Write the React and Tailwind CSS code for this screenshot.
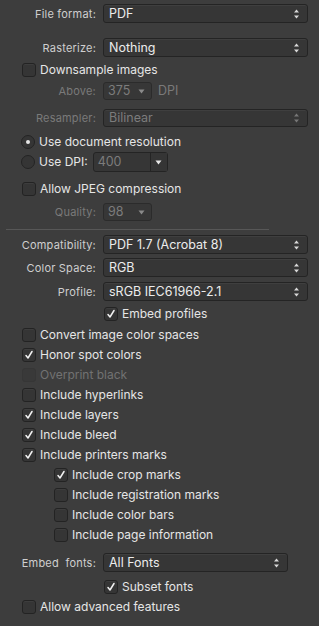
import React from "react";

function Arrows({ dim }) {
  return (
    <svg width="7" height="11" viewBox="0 0 7 11" className="absolute right-[7px] top-1/2 -translate-y-1/2">
      <path d="M3.5 1 L6 4 L1 4 Z" fill={dim ? "#777" : "#d8d8d8"} />
      <path d="M3.5 10 L6 7 L1 7 Z" fill={dim ? "#777" : "#d8d8d8"} />
    </svg>
  );
}

function Down({ color = "#8a8a8a" }) {
  return (
    <svg width="7" height="5" viewBox="0 0 7 5">
      <path d="M0.5 0.5 L6.5 0.5 L3.5 4.5 Z" fill={color} />
    </svg>
  );
}

function Select({ value, w = "w-[205px]", h = "h-[19px]", dim }) {
  return (
    <div
      className={`relative ${w} ${h} rounded-[3px] border border-[#242424] bg-[#363636] shadow-[inset_0_1px_0_#3f3f3f] flex items-center pl-[5px] text-[12.5px] leading-[16px] ${
        dim ? "text-[#7c7c7c]" : "text-[#ececec]"
      }`}
    >
      {value}
      <Arrows dim={dim} />
    </div>
  );
}

function SmallPop({ value }) {
  return (
    <div className="w-[49px] h-[18px] rounded-[3px] border border-[#2b2b2b] bg-[#373737] flex items-center justify-between pl-[4px] pr-[6px] text-[12.5px] leading-[16px] text-[#7c7c7c]">
      {value}
      <Down />
    </div>
  );
}

function Row({ label, children, className = "", dim }) {
  return (
    <div className={`flex items-center ${className}`}>
      <div
        className={`w-[96px] text-right text-[11px] leading-[16px] tracking-[0.2px] whitespace-pre ${
          dim ? "text-[#7a7a7a]" : "text-[#cfcfcf]"
        }`}
      >
        {label}
      </div>
      <div className="ml-[7px] flex items-center">{children}</div>
    </div>
  );
}

function Check({ label, checked, dim, indent = "pl-[22px]" }) {
  return (
    <div className={`flex items-center h-[20px] ${indent}`}>
      <div
        className={`w-[14px] h-[14px] rounded-[3px] border flex items-center justify-center ${
          dim ? "border-[#363636] bg-[#393939]" : "border-[#232323] bg-[#353535] shadow-[inset_0_1px_0_#3d3d3d]"
        }`}
      >
        {checked && (
          <svg width="10" height="10" viewBox="0 0 10 10">
            <path d="M2 5.5 L4 8 L8 1.5" stroke="#f2f2f2" strokeWidth="1.5" fill="none" strokeLinecap="round" strokeLinejoin="round" />
          </svg>
        )}
      </div>
      <span className={`ml-[4px] text-[12px] leading-[16px] ${dim ? "text-[#727272]" : "text-[#e6e6e6]"}`}>{label}</span>
    </div>
  );
}

function Radio({ label, on, children }) {
  return (
    <div className="flex items-center h-[20px] pl-[21px]">
      <div className="w-[14px] h-[14px] rounded-full border border-[#242424] bg-[#353535] flex items-center justify-center">
        {on && <div className="w-[4px] h-[4px] rounded-full bg-[#e6e6e6]" />}
      </div>
      <span className="ml-[4px] text-[12px] leading-[16px] text-[#e6e6e6]">{label}</span>
      {children}
    </div>
  );
}

export default function App() {
  return (
    <div
      className="w-[319px] h-[626px] bg-[#3d3d3d] overflow-hidden"
      style={{ fontFamily: "Inter, 'Liberation Sans', sans-serif" }}
    >
      <div className="flex flex-col pt-[4px]">
        <Row label="File format:">
          <Select value="PDF" />
        </Row>
        <Row label="Rasterize:" className="mt-[15px]">
          <Select value="Nothing" />
        </Row>
        <div className="mt-[3px]">
          <Check label="Downsample images" />
        </div>
        <Row label="Above:" dim className="mt-[2px]">
          <SmallPop value="375" />
          <span className="ml-[6px] text-[12.5px] leading-[16px] text-[#7a7a7a]">DPI</span>
        </Row>
        <Row label="Resampler:" dim className="mt-[9px]">
          <Select value="Bilinear" h="h-[18px]" dim />
        </Row>
        <div className="mt-[5px]">
          <Radio label="Use document resolution" on />
        </div>
        <Radio label="Use DPI:">
          <div className="ml-[5px] w-[75px] h-[20px] rounded-[3px] border border-[#242424] bg-[#363636] flex items-stretch">
            <div className="flex-1 flex items-center pl-[4px] text-[12.5px] leading-[16px] text-[#7c7c7c]">400</div>
            <div className="w-[17px] border-l border-[#242424] bg-[#353535] flex items-center justify-center">
              <Down color="#e8e8e8" />
            </div>
          </div>
        </Radio>
        <div className="mt-[7px]">
          <Check label="Allow JPEG compression" />
        </div>
        <Row label="Quality:" dim className="mt-[4px]">
          <SmallPop value="98" />
        </Row>
        <div className="mt-[8px] ml-[6px] w-[263px] h-px bg-[#575757]" />
        <Row label="Compatibility:" className="mt-[5px]">
          <Select value="PDF 1.7 (Acrobat 8)" />
        </Row>
        <Row label="Color Space:" className="mt-[4px]">
          <Select value="RGB" />
        </Row>
        <Row label="Profile:" className="mt-[5px]">
          <Select value="sRGB IEC61966-2.1" />
        </Row>
        <div className="mt-[3px]">
          <Check label="Embed profiles" checked indent="pl-[104px]" />
        </div>
        <div className="mt-[1px]">
          <Check label="Convert image color spaces" />
          <Check label="Honor spot colors" checked />
          <Check label="Overprint black" dim />
          <Check label="Include hyperlinks" />
          <Check label="Include layers" checked />
          <Check label="Include bleed" checked />
          <Check label="Include printers marks" checked />
          <Check label="Include crop marks" checked indent="pl-[54px]" />
          <Check label="Include registration marks" indent="pl-[54px]" />
          <Check label="Include color bars" indent="pl-[54px]" />
          <Check label="Include page information" indent="pl-[54px]" />
        </div>
        <Row label="Embed  fonts:" className="mt-[8px]">
          <Select value="All Fonts" w="w-[185px]" />
        </Row>
        <div className="mt-[5px]">
          <Check label="Subset fonts" checked indent="pl-[104px]" />
        </div>
        <Check label="Allow advanced features" />
      </div>
    </div>
  );
}
